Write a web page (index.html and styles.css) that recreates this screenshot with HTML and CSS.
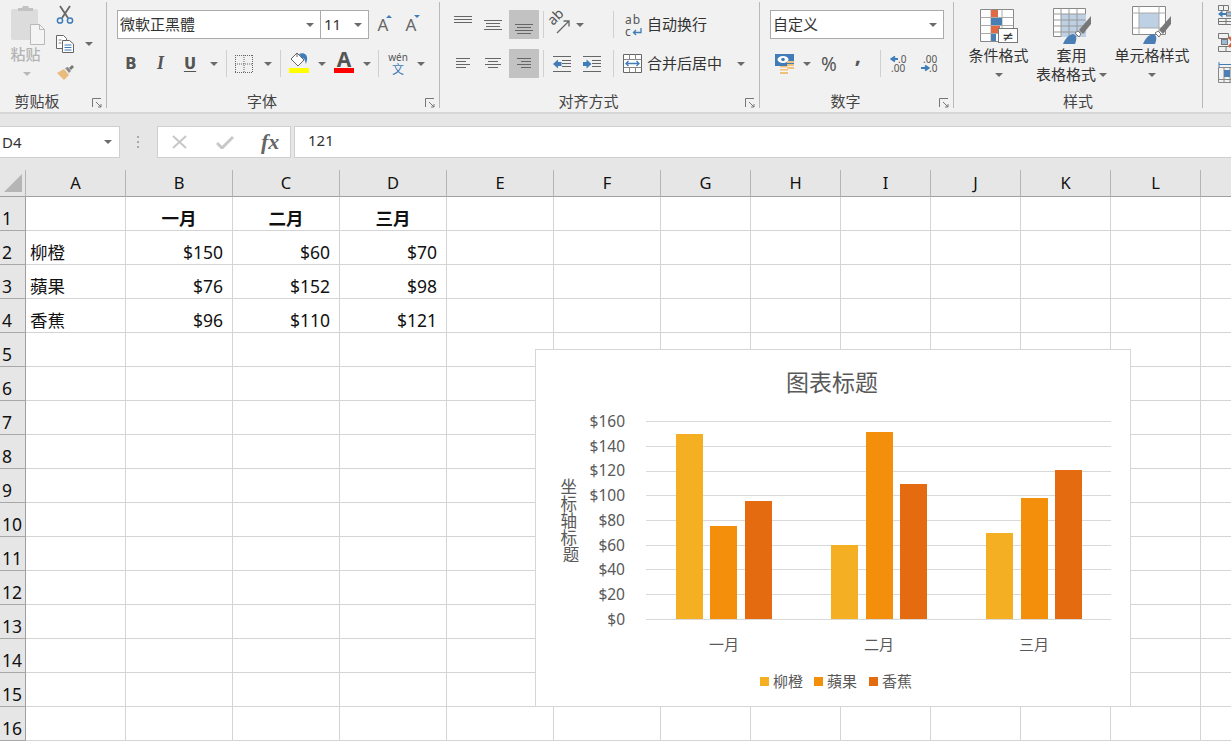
FILE: index.html
```html
<!DOCTYPE html>
<html lang="zh-CN">
<head>
<meta charset="UTF-8" />
<title>Excel</title>
<link rel="stylesheet" href="styles.css">
</head>
<body>
  <!-- ribbon -->
  <div class="ribbon">
    <section class="group group-clipboard">
      <div class="group-body clipboard-body">
        <div class="paste">
          <svg width="36" height="40" viewBox="0 0 36 40">
            <rect x="1" y="4" width="27" height="31" rx="2" fill="#dcdcdc"/>
            <path d="M8 6V3h4l1-2h5l1 2h4v3z" fill="#c2c2c2"/>
            <path d="M20.500 19.500h9l5 5v15h-14z" fill="#f4f4f4" stroke="#b9b9b9"/>
            <path d="M29.500 19.500v5h5" fill="none" stroke="#b9b9b9"/>
          </svg>
          <span class="paste-text">粘贴</span>
          <i class="caret caret-light"></i>
        </div>
        <div class="small-tools">
          <div class="btn">
            <svg width="18" height="20" viewBox="0 0 18 20">
              <path d="M4 1l8 12M14 1L6 13" stroke="#666" stroke-width="1.800" fill="none"/>
              <circle cx="4" cy="15.500" r="2.600" fill="none" stroke="#3f7cb8" stroke-width="1.500"/>
              <circle cx="14" cy="15.500" r="2.600" fill="none" stroke="#3f7cb8" stroke-width="1.500"/>
            </svg>
          </div>
          <div class="btn copy-btn">
            <svg width="18" height="18" viewBox="0 0 18 18">
              <path d="M.5.500h7l3 3v10H.5z" fill="#fff" stroke="#666"/>
              <path d="M6.500 5.500h7l4 3.500v8.500H6.500z" fill="#fff" stroke="#666"/>
              <path d="M8.500 10h7M8.500 12.500h7M8.500 15h7" stroke="#3f7cb8"/>
              <path d="M2.500 5h3M2.500 8h3" stroke="#888"/>
            </svg>
            <i class="caret"></i>
          </div>
          <div class="btn">
            <svg width="18" height="16" viewBox="0 0 18 16">
              <path d="M1 8l7-4 5 6-5 5z" fill="#e9bb7d"/>
              <path d="M9 3l3-1 3 4-2 2z" fill="#8a8a8a"/>
              <path d="M13 3l3-3 2 2-3 3z" fill="#777"/>
            </svg>
          </div>
        </div>
      </div>
      <div class="group-label">剪贴板</div>
      <svg class="launcher" width="10" height="10" viewBox="0 0 10 10"><path d="M.5 9V.5H9M4 4l5 5M9 6v3H6" fill="none" stroke="#777"/></svg>
    </section>

    <section class="group group-font">
      <div class="group-body rows">
        <div class="row">
          <div class="combo font-name"><span>微軟正黑體</span><i class="caret"></i></div>
          <div class="combo font-size"><span>11</span><i class="caret"></i></div>
          <div class="btn w28 grow-font">A<i class="tip tip-up"></i></div>
          <div class="btn w28 grow-font">A<i class="tip tip-down"></i></div>
        </div>
        <div class="row">
          <div class="btn w28 fmt fmt-b">B</div>
          <div class="btn w31 fmt fmt-i">I</div>
          <div class="btn w28 fmt fmt-u">U</div>
          <div class="btn w20"><i class="caret"></i></div>
          <i class="sep ml2"></i>
          <div class="btn w34">
            <svg width="18" height="18" viewBox="0 0 18 18"><path d="M.5 0v18M17.500 0v18M9 0v18M0 .5h18M0 17.500h18M0 9h18" fill="none" stroke="#666" stroke-dasharray="1 1"/></svg>
          </div>
          <div class="btn w14"><i class="caret"></i></div>
          <i class="sep ml5"></i>
          <div class="btn w36 color-btn">
            <svg width="18" height="16" viewBox="0 0 18 16">
              <path d="M7 1l7 7-6 6-7-7z" fill="#fff" stroke="#666"/>
              <path d="M7 1V5" stroke="#666"/>
              <path d="M9 2c5-2 9 1 8 6l-1 4c-1-3-1-6-4-6z" fill="#3f7cb8"/>
            </svg>
            <i class="bar bar-yellow"></i>
          </div>
          <div class="btn w10"><i class="caret"></i></div>
          <div class="btn w34 color-btn">
            <span class="color-a">A</span>
            <i class="bar bar-red"></i>
          </div>
          <div class="btn w12"><i class="caret"></i></div>
          <i class="sep ml5"></i>
          <div class="btn w38 wen"><span class="wen-top">wén</span><span class="wen-bot">文</span></div>
          <div class="btn w8"><i class="caret"></i></div>
        </div>
      </div>
      <div class="group-label">字体</div>
      <svg class="launcher" width="10" height="10" viewBox="0 0 10 10"><path d="M.5 9V.5H9M4 4l5 5M9 6v3H6" fill="none" stroke="#777"/></svg>
    </section>

    <section class="group group-align">
      <div class="group-body rows">
        <div class="row">
          <div class="btn w30">
            <svg width="18" height="18" viewBox="0 0 18 18"><path d="M0 1.500h18M0 4.500h18M0 7.500h18" stroke="#666" transform="translate(0 -1)"/></svg>
          </div>
          <div class="btn w30">
            <svg width="18" height="18" viewBox="0 0 18 18"><path d="M0 5.500h18M2 8.500h14M2 11.500h14M0 14.500h18" stroke="#666" transform="translate(0 -1)"/></svg>
          </div>
          <div class="btn w30 ml1 is-on">
            <svg width="18" height="18" viewBox="0 0 18 18"><path d="M0 8.500h18M2 11.500h14M0 14.500h18M2 17.500h14" stroke="#666"/></svg>
          </div>
          <i class="sep ml4"></i>
          <div class="btn w32">
            <svg width="24" height="26" viewBox="0 0 24 26">
              <text class="orient-text" transform="translate(5 14) rotate(-45)">ab</text>
              <path d="M9 21L20.500 9.500M15.500 9h5.500v5.500" fill="none" stroke="#666" stroke-width="1.300"/>
            </svg>
          </div>
          <div class="btn w8"><i class="caret"></i></div>
          <i class="sep ml29"></i>
          <div class="btn tool-wide">
            <svg class="tool-icon" width="18" height="26" viewBox="0 0 18 26">
              <text class="wrap-text" x="0" y="12">ab</text>
              <text class="wrap-text" x="0" y="24">c</text>
              <path d="M16 16v4.500H9M11 18L8.500 20.500 11 23" fill="none" stroke="#3f7cb8" stroke-width="1.300"/>
            </svg>
            <span class="tool-text">自动换行</span>
          </div>
        </div>
        <div class="row">
          <div class="btn w30">
            <svg width="14" height="11" viewBox="0 0 14 11"><path d="M0 .5h14M0 3.500h10M0 6.500h14M0 9.500h10" stroke="#666"/></svg>
          </div>
          <div class="btn w30">
            <svg width="16" height="11" viewBox="0 0 16 11"><path d="M0 .5h16M3 3.500h10M0 6.500h16M3 9.500h10" stroke="#666"/></svg>
          </div>
          <div class="btn w30 ml1 is-on">
            <svg width="14" height="11" viewBox="0 0 14 11"><path d="M0 .5h14M4 3.500h10M0 6.500h14M4 9.500h10" stroke="#666"/></svg>
          </div>
          <i class="sep ml4"></i>
          <div class="btn w36">
            <svg width="18" height="16" viewBox="0 0 18 16"><path d="M0 .5h18M9 4.500h9M9 7.500h9M9 10.500h9M0 15.500h18" stroke="#666"/><path d="M0 8l5-4.500V6h3.500v4H5v2.500z" fill="#3f7cb8"/></svg>
          </div>
          <div class="btn w24">
            <svg width="18" height="16" viewBox="0 0 18 16"><path d="M0 .5h18M9 4.500h9M9 7.500h9M9 10.500h9M0 15.500h18" stroke="#666"/><path d="M8.500 8l-5-4.500V6H0v4h3.500v2.500z" fill="#3f7cb8"/></svg>
          </div>
          <i class="sep ml9"></i>
          <div class="btn tool-wide">
            <svg class="tool-icon merge-icon" width="19" height="19" viewBox="0 0 19 19">
              <path d="M.5.500h18v18H.5z" fill="#fff" stroke="#666"/>
              <path d="M.5 5.500h18M.5 13.500h18M6.500.5v5M12.500.5v5M6.500 13.500v5M12.500 13.500v5" fill="none" stroke="#888"/>
              <path d="M3 9.500h13M5.500 7L3 9.500 5.500 12M13.500 7L16 9.500 13.500 12" fill="none" stroke="#3f7cb8" stroke-width="1.300"/>
            </svg>
            <span class="tool-text">合并后居中</span>
            <i class="caret merge-caret"></i>
          </div>
        </div>
      </div>
      <div class="group-label">对齐方式</div>
      <svg class="launcher" width="10" height="10" viewBox="0 0 10 10"><path d="M.5 9V.5H9M4 4l5 5M9 6v3H6" fill="none" stroke="#777"/></svg>
    </section>

    <section class="group group-number">
      <div class="group-body rows">
        <div class="row">
          <div class="combo number-format"><span>自定义</span><i class="caret"></i></div>
        </div>
        <div class="row">
          <div class="btn w30">
            <svg width="20" height="20" viewBox="0 0 20 20">
              <path d="M0 0h19v12H0z" fill="#3f7cb8"/>
              <ellipse cx="8" cy="5.500" rx="5.500" ry="3.500" fill="#fff"/>
              <circle cx="8" cy="5.500" r="1.800" fill="#3f7cb8"/>
              <path d="M12 7h7v2h-7zM12 10h7v2h-7zM12 13h7v2h-7z" fill="#eec17d"/>
              <path d="M5 12h8v2H5zM5 15h8v2H5zM5 18h8v2H5z" fill="#eec17d"/>
              <path d="M5 14h8M5 17h8" stroke="#fff" stroke-width=".8"/>
            </svg>
          </div>
          <div class="btn w14"><i class="caret"></i></div>
          <div class="btn w30 percent">%</div>
          <div class="btn w28 comma">,</div>
          <i class="sep ml8"></i>
          <div class="btn w36 decimals">
            <svg width="18" height="20" viewBox="0 0 18 20"><path d="M8 5H3M5 2.500L1.500 5 5 7.500" fill="none" stroke="#3f7cb8" stroke-width="2"/><text class="dec-text" x="8" y="9">.0</text><text class="dec-text" x="1" y="18">.00</text></svg>
          </div>
          <div class="btn w24 decimals">
            <svg width="18" height="20" viewBox="0 0 18 20"><text class="dec-text" x="3" y="9">.00</text><path d="M1 14h6M5 11.500L8.500 14 5 16.500" fill="none" stroke="#3f7cb8" stroke-width="2"/><text class="dec-text" x="9" y="18">.0</text></svg>
          </div>
        </div>
      </div>
      <div class="group-label">数字</div>
      <svg class="launcher" width="10" height="10" viewBox="0 0 10 10"><path d="M.5 9V.5H9M4 4l5 5M9 6v3H6" fill="none" stroke="#777"/></svg>
    </section>

    <section class="group group-styles">
      <div class="group-body styles-body">
        <div class="style-btn style-cond">
          <svg width="38" height="36" viewBox="0 0 38 36">
            <path d="M.5 1.500h33v32H.5z" fill="#fff" stroke="#888"/>
            <path d="M11 1.500v32M22 1.500v32M.5 9.500h33M.5 17.500h33M.5 25.500h33" stroke="#aaa"/>
            <rect x="11" y="2" width="7" height="7" fill="#df6a43"/>
            <rect x="11" y="10" width="11" height="7" fill="#4a7fb5"/>
            <rect x="11" y="18" width="9" height="7" fill="#df6a43"/>
            <rect x="11" y="26" width="5" height="7" fill="#4a7fb5"/>
            <rect x="18.500" y="20.500" width="19" height="14" fill="#fff" stroke="#777"/>
            <text class="ne-text" x="28" y="33">≠</text>
          </svg>
          <span>条件格式</span>
          <i class="caret"></i>
        </div>
        <div class="style-btn style-table">
          <svg width="38" height="36" viewBox="0 0 38 36">
            <path d="M.5.500h32v28H.5z" fill="#fff" stroke="#888"/>
            <rect x="8" y="6" width="25" height="23" fill="#bdd0e4"/>
            <path d="M8 .5v28M16 .5v28M24 .5v28M.5 6h32M.5 12h32M.5 18h32M.5 24h32" stroke="#999"/>
            <path d="M10 36c2-5 5-9 10-10 4 1 4 5 2 10z" fill="#4a7fb5"/>
            <path d="M22 25l3-2 3 3-2 3z" fill="#fff" stroke="#777"/>
            <path d="M26 22L38 8v8l-8 10z" fill="#777"/>
          </svg>
          <span>套用</span>
          <span class="with-caret">表格格式<i class="caret"></i></span>
        </div>
        <div class="style-btn style-cell">
          <svg width="40" height="38" viewBox="0 0 40 38">
            <path d="M.5.500h33v28H.5z" fill="#fff" stroke="#888"/>
            <rect x="7" y="7" width="20" height="15" fill="#bdd0e4"/>
            <path d="M7 .5v28M27 .5v28M.5 7h33M.5 22h33" stroke="#aaa"/>
            <path d="M11 38c2-5 5-9 10-10 4 1 4 5 2 10z" fill="#4a7fb5"/>
            <path d="M23 27l3-2 3 3-2 3z" fill="#fff" stroke="#777"/>
            <path d="M27 24L39 10v8l-8 10z" fill="#777"/>
          </svg>
          <span>单元格样式</span>
          <i class="caret"></i>
        </div>
      </div>
      <div class="group-label">样式</div>
    </section>

    <section class="group-cells">
      <svg width="20" height="20" viewBox="0 0 20 20"><path d="M.5.500h10v5H.5zM5.500.5v5M.5 13.500h15v6H.5zM.5 16.500h15M8 13.500v6" fill="none" stroke="#777"/><path d="M0 9l4.500-3.500V8H8v2H4.500v2.500z" fill="#3f7cb8"/><rect x="8.500" y="7" width="6" height="4" fill="#9db9d6" stroke="#777"/></svg>
      <svg width="20" height="20" viewBox="0 0 20 20"><path d="M.5.500h10v5H.5zM.5 13.500h15v5H.5zM8 13.500v5" fill="none" stroke="#777"/><rect x="3.500" y="6.500" width="6" height="5" fill="#9db9d6" stroke="#777"/><path d="M11 4l4 5-4 5" fill="none" stroke="#df5a33" stroke-width="2.500"/></svg>
      <svg width="20" height="22" viewBox="0 0 20 22"><path d="M1 3.500h13M1 1v5M14 1v5" stroke="#3f7cb8" fill="none"/><path d="M.5 6.500h17v15H.5zM6 6.500v15M12 6.500v15M.5 18.500h17" fill="none" stroke="#888"/><rect x="6" y="9" width="6" height="7" fill="#4a7fb5"/></svg>
    </section>
  </div>

  <!-- formula bar -->
  <div class="formula-band">
    <div class="name-box"><span>D4</span><i class="caret"></i></div>
    <div class="grip"></div>
    <div class="fx-box">
      <svg width="18" height="14" viewBox="0 0 18 14"><path d="M2 1l13 12M15 1L2 13" stroke="#c8c8c8" stroke-width="2"/></svg>
      <svg width="18" height="14" viewBox="0 0 18 14"><path d="M1 8l5 5L17 2" fill="none" stroke="#c8c8c8" stroke-width="3"/></svg>
      <span class="fx">fx</span>
    </div>
    <div class="formula-input">121</div>
  </div>

  <!-- sheet -->
  <div class="sheet">
    <table class="grid">
      <colgroup>
        <col class="c-head"><col class="c-a"><col class="c-wide"><col class="c-wide"><col class="c-wide"><col class="c-wide"><col class="c-wide">
        <col class="c-std"><col class="c-std"><col class="c-std"><col class="c-std"><col class="c-std"><col class="c-std"><col class="c-std">
      </colgroup>
      <thead>
        <tr>
          <th class="corner"><svg width="18" height="18" viewBox="0 0 18 18"><path d="M18 0v18H0z" fill="#b5b5b5"/></svg></th>
          <th>A</th><th>B</th><th>C</th><th>D</th><th>E</th><th>F</th><th>G</th><th>H</th><th>I</th><th>J</th><th>K</th><th>L</th><th></th>
        </tr>
      </thead>
      <tbody>
        <tr><th>1</th><td></td><td class="title">一月</td><td class="title">二月</td><td class="title">三月</td><td></td><td></td><td></td><td></td><td></td><td></td><td></td><td></td><td></td></tr>
        <tr><th>2</th><td>柳橙</td><td class="num">$150</td><td class="num">$60</td><td class="num">$70</td><td></td><td></td><td></td><td></td><td></td><td></td><td></td><td></td><td></td></tr>
        <tr><th>3</th><td>蘋果</td><td class="num">$76</td><td class="num">$152</td><td class="num">$98</td><td></td><td></td><td></td><td></td><td></td><td></td><td></td><td></td><td></td></tr>
        <tr><th>4</th><td>香蕉</td><td class="num">$96</td><td class="num">$110</td><td class="num">$121</td><td></td><td></td><td></td><td></td><td></td><td></td><td></td><td></td><td></td></tr>
        <tr><th>5</th><td></td><td></td><td></td><td></td><td></td><td></td><td></td><td></td><td></td><td></td><td></td><td></td><td></td></tr>
        <tr><th>6</th><td></td><td></td><td></td><td></td><td></td><td></td><td></td><td></td><td></td><td></td><td></td><td></td><td></td></tr>
        <tr><th>7</th><td></td><td></td><td></td><td></td><td></td><td></td><td></td><td></td><td></td><td></td><td></td><td></td><td></td></tr>
        <tr><th>8</th><td></td><td></td><td></td><td></td><td></td><td></td><td></td><td></td><td></td><td></td><td></td><td></td><td></td></tr>
        <tr><th>9</th><td></td><td></td><td></td><td></td><td></td><td></td><td></td><td></td><td></td><td></td><td></td><td></td><td></td></tr>
        <tr><th>10</th><td></td><td></td><td></td><td></td><td></td><td></td><td></td><td></td><td></td><td></td><td></td><td></td><td></td></tr>
        <tr><th>11</th><td></td><td></td><td></td><td></td><td></td><td></td><td></td><td></td><td></td><td></td><td></td><td></td><td></td></tr>
        <tr><th>12</th><td></td><td></td><td></td><td></td><td></td><td></td><td></td><td></td><td></td><td></td><td></td><td></td><td></td></tr>
        <tr><th>13</th><td></td><td></td><td></td><td></td><td></td><td></td><td></td><td></td><td></td><td></td><td></td><td></td><td></td></tr>
        <tr><th>14</th><td></td><td></td><td></td><td></td><td></td><td></td><td></td><td></td><td></td><td></td><td></td><td></td><td></td></tr>
        <tr><th>15</th><td></td><td></td><td></td><td></td><td></td><td></td><td></td><td></td><td></td><td></td><td></td><td></td><td></td></tr>
        <tr><th>16</th><td></td><td></td><td></td><td></td><td></td><td></td><td></td><td></td><td></td><td></td><td></td><td></td><td></td></tr>
      </tbody>
    </table>

    <!-- embedded chart sits over the cells -->
    <div class="chart">
      <svg width="594" height="356" viewBox="1 1 594 356">
        <text class="chart-title" x="297" y="42">图表标题</text>

        <g class="gridlines">
          <path d="M111 72.500h465M111 97.500h465M111 122.500h465M111 146.500h465M111 171.500h465M111 196.500h465M111 220.500h465M111 245.500h465M111 270.500h465"/>
        </g>

        <g class="y-labels">
          <text x="90" y="78">$160</text>
          <text x="90" y="103">$140</text>
          <text x="90" y="127">$120</text>
          <text x="90" y="152">$100</text>
          <text x="90" y="177">$80</text>
          <text x="90" y="202">$60</text>
          <text x="90" y="226">$40</text>
          <text x="90" y="251">$20</text>
          <text x="90" y="276">$0</text>
        </g>

        <text class="axis-title">
          <tspan x="36" y="144">坐</tspan>
          <tspan x="36" y="161">标</tspan>
          <tspan x="36" y="178">轴</tspan>
          <tspan x="36" y="195">标</tspan>
          <tspan x="36" y="212">题</tspan>
        </text>

        <g class="s1">
          <rect x="141" y="85" width="27" height="185"/>
          <rect x="296" y="196" width="27" height="74"/>
          <rect x="451" y="184" width="27" height="86"/>
        </g>
        <g class="s2">
          <rect x="175" y="177" width="27" height="93"/>
          <rect x="331" y="83" width="27" height="187"/>
          <rect x="486" y="149" width="27" height="121"/>
        </g>
        <g class="s3">
          <rect x="210" y="152" width="27" height="118"/>
          <rect x="365" y="135" width="27" height="135"/>
          <rect x="520" y="121" width="27" height="149"/>
        </g>

        <g class="x-labels">
          <text x="189" y="301">一月</text>
          <text x="344" y="301">二月</text>
          <text x="499" y="301">三月</text>
        </g>

        <g class="legend">
          <rect class="s1" x="225" y="328" width="9" height="9"/><text x="238" y="338">柳橙</text>
          <rect class="s2" x="279" y="328" width="9" height="9"/><text x="292" y="338">蘋果</text>
          <rect class="s3" x="334" y="328" width="9" height="9"/><text x="347" y="338">香蕉</text>
        </g>
      </svg>
    </div>
  </div>
</body>
</html>
```

FILE: styles.css
```css
:root {
  --ribbon: #f1f1f1;
  --band: #e6e6e6;
  --line: #d4d4d4;
  --head-line: #b4b4b4;
  --ink: #444;
  --blue: #3f7cb8;
}

html, body {
  margin: 0;
  height: 742px;
  overflow: hidden;
}

body {
  background: #fff;
  color: var(--ink);
  font-family: "Noto Sans", "Noto Sans CJK SC", sans-serif;
  font-size: 15px;
}

/* ribbon */
.ribbon {
  display: flex;
  height: 110px;
  padding-top: 2px;
  background: var(--ribbon);
  border-bottom: 2px solid #d6d6d6;
  overflow: hidden;
}

.group {
  position: relative;
  display: flex;
  flex-direction: column;
  flex: none;
  height: 106px;
  box-sizing: border-box;
  border-right: 1px solid #b9b9b9;
}

.group-clipboard { width: 107px; }
.group-font { width: 333px; }
.group-align { width: 320px; }
.group-number { width: 194px; }
.group-styles { width: 249px; }

.group-body {
  flex: none;
  height: 90px;
}

.group-label {
  height: 16px;
  line-height: 19px;
  padding-right: 22px;
  text-align: center;
  white-space: nowrap;
}

.group-clipboard .group-label { padding-right: 32px; }
.group-styles .group-label { padding-right: 0; }

.launcher {
  position: absolute;
  right: 4px;
  bottom: 0;
}

.rows {
  display: flex;
  flex-direction: column;
  gap: 10px;
  box-sizing: border-box;
  padding-top: 8px;
}

.group-font .group-body { padding-left: 10px; }
.group-align .group-body { padding-left: 8px; }
.group-number .group-body { padding-left: 10px; }

.row {
  display: flex;
  align-items: center;
  height: 29px;
}

.row svg {
  overflow: visible;
}

.btn {
  display: flex;
  flex: none;
  align-items: center;
  justify-content: center;
  height: 29px;
  position: relative;
}

.w8 { width: 8px; }
.w10 { width: 10px; }
.w12 { width: 12px; }
.w14 { width: 14px; }
.w20 { width: 20px; }
.w24 { width: 24px; }
.w28 { width: 28px; }
.w30 { width: 30px; }
.w31 { width: 31px; }
.w32 { width: 32px; }
.w34 { width: 34px; }
.w36 { width: 36px; }
.w38 { width: 38px; }

.ml1 { margin-left: 1px; }
.ml2 { margin-left: 2px; }
.ml4 { margin-left: 4px; }
.ml5 { margin-left: 5px; }
.ml8 { margin-left: 8px; }
.ml9 { margin-left: 9px; }
.ml29 { margin-left: 29px; }

.is-on { background: #c2c2c2; }

.sep {
  flex: none;
  width: 1px;
  height: 27px;
  background: #d0d0d0;
}

.caret {
  display: block;
  flex: none;
  width: 0;
  height: 0;
  border-left: 4px solid transparent;
  border-right: 4px solid transparent;
  border-top: 4px solid #6b6b6b;
}

.caret-light { border-top-color: #b8b8b8; }

/* clipboard */
.clipboard-body {
  display: flex;
}

.paste {
  display: flex;
  flex-direction: column;
  align-items: center;
  box-sizing: border-box;
  width: 46px;
  padding-top: 3px;
  padding-left: 5px;
}

.paste svg {
  margin-left: 5px;
}

.paste-text {
  margin-top: -2px;
  line-height: 22px;
  font-weight: 500;
  color: #b4b4b4;
}

.paste .caret {
  margin-top: 7px;
  margin-left: 3px;
}

.small-tools {
  display: flex;
  flex-direction: column;
  margin-left: 9px;
  margin-top: -2px;
  width: 20px;
}

.copy-btn .caret {
  position: absolute;
  left: 30px;
  top: 13px;
}

/* font */
.combo {
  display: flex;
  flex: none;
  align-items: center;
  justify-content: space-between;
  box-sizing: border-box;
  height: 29px;
  padding: 0 6px 0 2px;
  background: #fff;
  border: 1px solid #ababab;
  color: #333;
}

.combo span {
  margin-bottom: 2px;
}

.font-name { width: 204px; }
.font-size { width: 49px; margin-left: -1px; padding-left: 3px; }
.number-format { width: 174px; }

.grow-font {
  font-size: 17px;
  color: #666;
}

.tip {
  position: absolute;
  top: 5px;
  right: 5px;
  width: 0;
  height: 0;
  border-left: 3px solid transparent;
  border-right: 3px solid transparent;
}

.tip-up { border-bottom: 3px solid var(--blue); }
.tip-down { border-top: 3px solid var(--blue); }

.fmt {
  font-family: "DejaVu Sans", sans-serif;
  font-size: 15px;
  font-weight: 700;
  color: #555;
}

.fmt-i {
  font-family: "Liberation Serif", serif;
  font-size: 18px;
  font-style: italic;
}

.fmt-u {
  text-decoration: underline;
  text-underline-offset: 2px;
}

.color-btn svg {
  margin-top: -7px;
}

.bar {
  position: absolute;
  left: 50%;
  bottom: 5px;
  width: 20px;
  height: 5px;
  margin-left: -10px;
}

.bar-yellow { background: #ffff00; }
.bar-red { background: #ff0000; }

.color-a {
  margin-top: -9px;
  font-size: 21px;
  font-weight: 700;
  line-height: 20px;
  color: #555;
}

.wen {
  flex-direction: column;
}

.wen-top {
  font-size: 10px;
  line-height: 12px;
  color: #555;
}

.wen-bot {
  font-size: 12px;
  line-height: 13px;
  color: var(--blue);
}

/* alignment */
.orient-text {
  font-family: "Noto Sans", sans-serif;
  font-size: 14px;
  fill: #555;
}

.wrap-text {
  font-family: "Noto Sans", sans-serif;
  font-size: 12px;
  letter-spacing: 1px;
  fill: #555;
}

.tool-wide {
  justify-content: flex-start;
  color: #333;
}

.tool-text {
  margin-bottom: 2px;
}

.tool-icon {
  margin: 0 4px 0 11px;
}

.merge-icon {
  margin: 0 5px 0 9px;
}

.merge-caret {
  margin-left: 15px;
}

/* number */
.percent {
  font-size: 19px;
  color: #555;
}

.comma {
  font-size: 22px;
  font-weight: 700;
  color: #555;
  padding-bottom: 20px;
  box-sizing: border-box;
}

.dec-text {
  font-family: "Noto Sans", sans-serif;
  font-size: 10px;
  fill: #555;
}

/* styles */
.styles-body {
  display: flex;
  padding-left: 8px;
}

.style-btn {
  display: flex;
  flex-direction: column;
  align-items: center;
  flex: none;
  color: #333;
  line-height: 19px;
}

.style-btn svg {
  display: block;
  flex: none;
  margin-top: 6px;
  margin-bottom: 2px;
}

.style-cond { width: 73px; }
.style-table { width: 73px; }
.style-cell { width: 88px; }

.style-cell svg {
  margin-top: 4px;
  margin-bottom: 2px;
}

.style-btn > .caret {
  margin-top: 8px;
}

.with-caret {
  display: flex;
  align-items: center;
  gap: 3px;
}

.ne-text {
  font-family: "DejaVu Sans", sans-serif;
  font-size: 14px;
  text-anchor: middle;
  fill: #333;
}

.group-cells {
  display: flex;
  flex-direction: column;
  gap: 8px;
  flex: none;
  margin-left: 15px;
  padding-top: 3px;
}

/* formula bar */
.formula-band {
  display: flex;
  align-items: flex-start;
  height: 44px;
  padding-top: 12px;
  background: var(--band);
}

.name-box,
.fx-box,
.formula-input {
  box-sizing: border-box;
  height: 32px;
  background: #fff;
  border: 1px solid #cfcfcf;
}

.name-box {
  display: flex;
  align-items: center;
  justify-content: space-between;
  flex: none;
  width: 120px;
  padding: 0 7px 0 2px;
  border-left: 0;
  color: #333;
}

.grip {
  flex: none;
  width: 2px;
  height: 13px;
  margin: 10px 18px 0 17px;
  background: repeating-linear-gradient(#aaa 0 2px, transparent 2px 5px);
}

.fx-box {
  display: flex;
  align-items: center;
  flex: none;
  gap: 27px;
  width: 134px;
  padding-left: 13px;
  margin-right: 3px;
}

.fx {
  margin-left: 0;
  font-family: "Liberation Serif", serif;
  font-size: 22px;
  font-style: italic;
  font-weight: 700;
  color: #666;
}

.formula-input {
  flex: 1;
  padding-left: 13px;
  line-height: 27px;
  border-right: 0;
  color: #333;
}

/* sheet */
.sheet {
  position: relative;
  height: 572px;
  overflow: hidden;
}

.grid {
  width: 1291px;
  table-layout: fixed;
  border-collapse: separate;
  border-spacing: 0;
  color: #111;
  font-size: 17.500px;
}

.c-head { width: 26px; }
.c-a { width: 100px; }
.c-wide { width: 107px; }
.c-std { width: 90px; }

.grid thead th {
  box-sizing: border-box;
  height: 27px;
  padding: 0;
  background: var(--band);
  border-bottom: 1px solid #9f9f9f;
  border-right: 1px solid var(--head-line);
  font-size: 16.500px;
  font-weight: 400;
  line-height: 26px;
}

.grid thead .corner {
  position: relative;
}

.corner svg {
  position: absolute;
  left: 4px;
  top: 4px;
}

.grid tbody th {
  box-sizing: border-box;
  height: 34px;
  padding: 0 0 0 2px;
  background: var(--band);
  border-bottom: 1px solid #a8a8a8;
  border-right: 1px solid #9f9f9f;
  font-weight: 400;
  line-height: 24px;
  text-align: left;
  vertical-align: bottom;
  white-space: nowrap;
  overflow: hidden;
}

.grid td {
  box-sizing: border-box;
  height: 34px;
  padding: 0 4px;
  border-bottom: 1px solid var(--line);
  border-right: 1px solid var(--line);
  line-height: 24px;
  vertical-align: bottom;
  white-space: nowrap;
}

.grid .num {
  padding-right: 9px;
  text-align: right;
}

.grid .title {
  font-weight: 700;
  text-align: center;
}

/* chart */
.chart {
  position: absolute;
  left: 535px;
  top: 179px;
  width: 594px;
  height: 356px;
  background: #fff;
  border: 1px solid #d6d6d6;
}

.chart svg {
  display: block;
}

.chart text {
  font-family: "Noto Sans", "Noto Sans CJK SC", sans-serif;
  fill: #595959;
}

.chart .chart-title {
  font-size: 23px;
  text-anchor: middle;
}

.gridlines path {
  fill: none;
  stroke: #d9d9d9;
}

.y-labels text {
  font-size: 15.500px;
  text-anchor: end;
}

.x-labels text {
  font-size: 15px;
  text-anchor: middle;
}

.legend text {
  font-size: 15px;
}

.axis-title {
  font-size: 16.500px;
  text-anchor: middle;
}

.s1 { fill: #f4b022; }
.s2 { fill: #f48f0b; }
.s3 { fill: #e56b10; }
```
